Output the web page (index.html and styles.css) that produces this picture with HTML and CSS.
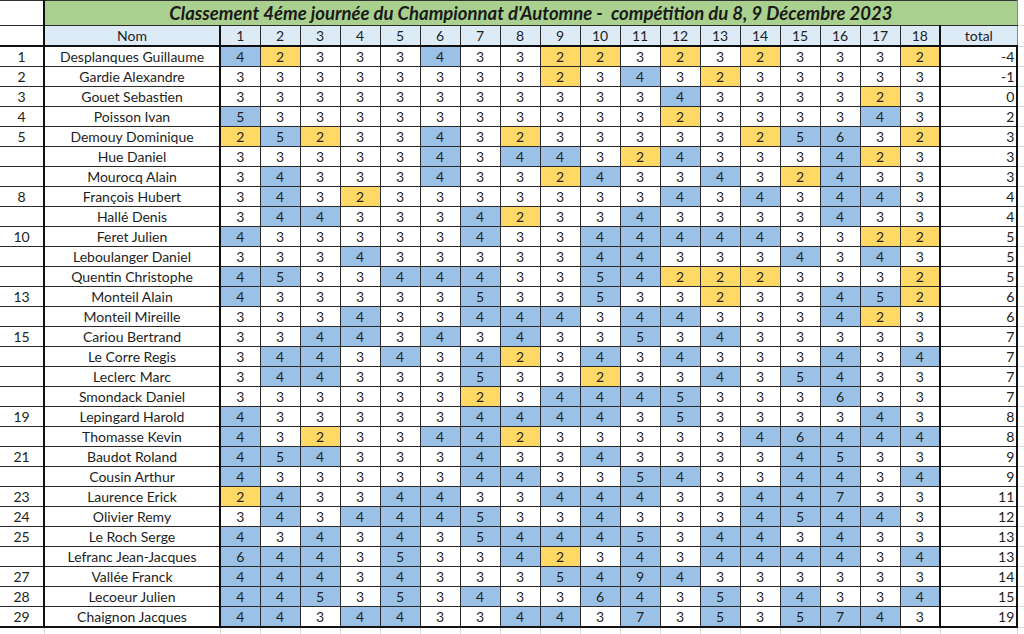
FILE: index.html
```html
<!DOCTYPE html>
<html lang="fr">
<head>
<meta charset="utf-8">
<title>Classement</title>
<link rel="stylesheet" href="styles.css">
</head>
<body>
<table class="sheet">
<colgroup>
<col class="c-rk"><col class="c-nm">
<col class="c-h"><col class="c-h"><col class="c-h"><col class="c-h"><col class="c-h"><col class="c-h">
<col class="c-h"><col class="c-h"><col class="c-h"><col class="c-h"><col class="c-h"><col class="c-h">
<col class="c-h"><col class="c-h"><col class="c-h"><col class="c-h"><col class="c-h"><col class="c-h">
<col class="c-tot"><col class="c-fill">
</colgroup>
<thead>
<tr class="title-row"><td class="rk"></td><td class="title" colspan="20">Classement 4éme journée du Championnat d'Automne -&nbsp; compétition du 8, 9 Décembre 2023</td><td class="fill"></td></tr>
<tr class="head-row"><td class="rk"></td><td class="nm">Nom</td><td>1</td><td>2</td><td>3</td><td>4</td><td>5</td><td>6</td><td>7</td><td>8</td><td>9</td><td>10</td><td>11</td><td>12</td><td>13</td><td>14</td><td>15</td><td>16</td><td>17</td><td>18</td><td class="tot-h">total</td><td class="fill"></td></tr>
</thead>
<tbody>
<tr><td class="rk">1</td><td class="nm">Desplanques Guillaume</td><td class="b">4</td><td class="y">2</td><td>3</td><td>3</td><td>3</td><td class="b">4</td><td>3</td><td>3</td><td class="y">2</td><td class="y">2</td><td>3</td><td class="y">2</td><td>3</td><td class="y">2</td><td>3</td><td>3</td><td>3</td><td class="y">2</td><td class="tot">-4</td><td class="fill"></td></tr>
<tr><td class="rk">2</td><td class="nm">Gardie Alexandre</td><td>3</td><td>3</td><td>3</td><td>3</td><td>3</td><td>3</td><td>3</td><td>3</td><td class="y">2</td><td>3</td><td class="b">4</td><td>3</td><td class="y">2</td><td>3</td><td>3</td><td>3</td><td>3</td><td>3</td><td class="tot">-1</td><td class="fill"></td></tr>
<tr><td class="rk">3</td><td class="nm">Gouet Sebastien</td><td>3</td><td>3</td><td>3</td><td>3</td><td>3</td><td>3</td><td>3</td><td>3</td><td>3</td><td>3</td><td>3</td><td class="b">4</td><td>3</td><td>3</td><td>3</td><td>3</td><td class="y">2</td><td>3</td><td class="tot">0</td><td class="fill"></td></tr>
<tr><td class="rk">4</td><td class="nm">Poisson Ivan</td><td class="b">5</td><td>3</td><td>3</td><td>3</td><td>3</td><td>3</td><td>3</td><td>3</td><td>3</td><td>3</td><td>3</td><td class="y">2</td><td>3</td><td>3</td><td>3</td><td>3</td><td class="b">4</td><td>3</td><td class="tot">2</td><td class="fill"></td></tr>
<tr><td class="rk">5</td><td class="nm">Demouy Dominique</td><td class="y">2</td><td class="b">5</td><td class="y">2</td><td>3</td><td>3</td><td class="b">4</td><td>3</td><td class="y">2</td><td>3</td><td>3</td><td>3</td><td>3</td><td>3</td><td class="y">2</td><td class="b">5</td><td class="b">6</td><td>3</td><td class="y">2</td><td class="tot">3</td><td class="fill"></td></tr>
<tr><td class="rk"></td><td class="nm">Hue Daniel</td><td>3</td><td>3</td><td>3</td><td>3</td><td>3</td><td class="b">4</td><td>3</td><td class="b">4</td><td class="b">4</td><td>3</td><td class="y">2</td><td class="b">4</td><td>3</td><td>3</td><td>3</td><td class="b">4</td><td class="y">2</td><td>3</td><td class="tot">3</td><td class="fill"></td></tr>
<tr><td class="rk"></td><td class="nm">Mourocq Alain</td><td>3</td><td class="b">4</td><td>3</td><td>3</td><td>3</td><td class="b">4</td><td>3</td><td>3</td><td class="y">2</td><td class="b">4</td><td>3</td><td>3</td><td class="b">4</td><td>3</td><td class="y">2</td><td class="b">4</td><td>3</td><td>3</td><td class="tot">3</td><td class="fill"></td></tr>
<tr><td class="rk">8</td><td class="nm">François Hubert</td><td>3</td><td class="b">4</td><td>3</td><td class="y">2</td><td>3</td><td>3</td><td>3</td><td>3</td><td>3</td><td>3</td><td>3</td><td class="b">4</td><td>3</td><td class="b">4</td><td>3</td><td class="b">4</td><td class="b">4</td><td>3</td><td class="tot">4</td><td class="fill"></td></tr>
<tr><td class="rk"></td><td class="nm">Hallé Denis</td><td>3</td><td class="b">4</td><td class="b">4</td><td>3</td><td>3</td><td>3</td><td class="b">4</td><td class="y">2</td><td>3</td><td>3</td><td class="b">4</td><td>3</td><td>3</td><td>3</td><td>3</td><td class="b">4</td><td>3</td><td>3</td><td class="tot">4</td><td class="fill"></td></tr>
<tr><td class="rk">10</td><td class="nm">Feret Julien</td><td class="b">4</td><td>3</td><td>3</td><td>3</td><td>3</td><td>3</td><td class="b">4</td><td>3</td><td>3</td><td class="b">4</td><td class="b">4</td><td class="b">4</td><td class="b">4</td><td class="b">4</td><td>3</td><td>3</td><td class="y">2</td><td class="y">2</td><td class="tot">5</td><td class="fill"></td></tr>
<tr><td class="rk"></td><td class="nm">Leboulanger Daniel</td><td>3</td><td>3</td><td>3</td><td class="b">4</td><td>3</td><td>3</td><td>3</td><td>3</td><td>3</td><td class="b">4</td><td class="b">4</td><td>3</td><td>3</td><td>3</td><td class="b">4</td><td>3</td><td class="b">4</td><td>3</td><td class="tot">5</td><td class="fill"></td></tr>
<tr><td class="rk"></td><td class="nm">Quentin Christophe</td><td class="b">4</td><td class="b">5</td><td>3</td><td>3</td><td class="b">4</td><td class="b">4</td><td class="b">4</td><td>3</td><td>3</td><td class="b">5</td><td class="b">4</td><td class="y">2</td><td class="y">2</td><td class="y">2</td><td>3</td><td>3</td><td>3</td><td class="y">2</td><td class="tot">5</td><td class="fill"></td></tr>
<tr><td class="rk">13</td><td class="nm">Monteil Alain</td><td class="b">4</td><td>3</td><td>3</td><td>3</td><td>3</td><td>3</td><td class="b">5</td><td>3</td><td>3</td><td class="b">5</td><td>3</td><td>3</td><td class="y">2</td><td>3</td><td>3</td><td class="b">4</td><td class="b">5</td><td class="y">2</td><td class="tot">6</td><td class="fill"></td></tr>
<tr><td class="rk"></td><td class="nm">Monteil Mireille</td><td>3</td><td>3</td><td>3</td><td class="b">4</td><td>3</td><td>3</td><td class="b">4</td><td class="b">4</td><td class="b">4</td><td>3</td><td class="b">4</td><td class="b">4</td><td>3</td><td>3</td><td>3</td><td class="b">4</td><td class="y">2</td><td>3</td><td class="tot">6</td><td class="fill"></td></tr>
<tr><td class="rk">15</td><td class="nm">Cariou Bertrand</td><td>3</td><td>3</td><td class="b">4</td><td class="b">4</td><td>3</td><td class="b">4</td><td>3</td><td class="b">4</td><td>3</td><td>3</td><td class="b">5</td><td>3</td><td class="b">4</td><td>3</td><td>3</td><td>3</td><td>3</td><td>3</td><td class="tot">7</td><td class="fill"></td></tr>
<tr><td class="rk"></td><td class="nm">Le Corre Regis</td><td>3</td><td class="b">4</td><td class="b">4</td><td>3</td><td class="b">4</td><td>3</td><td class="b">4</td><td class="y">2</td><td>3</td><td class="b">4</td><td>3</td><td class="b">4</td><td>3</td><td>3</td><td>3</td><td class="b">4</td><td>3</td><td class="b">4</td><td class="tot">7</td><td class="fill"></td></tr>
<tr><td class="rk"></td><td class="nm">Leclerc Marc</td><td>3</td><td class="b">4</td><td class="b">4</td><td>3</td><td>3</td><td>3</td><td class="b">5</td><td>3</td><td>3</td><td class="y">2</td><td>3</td><td>3</td><td class="b">4</td><td>3</td><td class="b">5</td><td class="b">4</td><td>3</td><td>3</td><td class="tot">7</td><td class="fill"></td></tr>
<tr><td class="rk"></td><td class="nm">Smondack Daniel</td><td>3</td><td>3</td><td>3</td><td>3</td><td>3</td><td>3</td><td class="y">2</td><td>3</td><td class="b">4</td><td class="b">4</td><td class="b">4</td><td class="b">5</td><td>3</td><td>3</td><td>3</td><td class="b">6</td><td>3</td><td>3</td><td class="tot">7</td><td class="fill"></td></tr>
<tr><td class="rk">19</td><td class="nm">Lepingard Harold</td><td class="b">4</td><td>3</td><td>3</td><td>3</td><td>3</td><td>3</td><td class="b">4</td><td class="b">4</td><td class="b">4</td><td class="b">4</td><td>3</td><td class="b">5</td><td>3</td><td>3</td><td>3</td><td>3</td><td class="b">4</td><td>3</td><td class="tot">8</td><td class="fill"></td></tr>
<tr><td class="rk"></td><td class="nm">Thomasse Kevin</td><td class="b">4</td><td>3</td><td class="y">2</td><td>3</td><td>3</td><td class="b">4</td><td class="b">4</td><td class="y">2</td><td>3</td><td>3</td><td>3</td><td>3</td><td>3</td><td class="b">4</td><td class="b">6</td><td class="b">4</td><td class="b">4</td><td class="b">4</td><td class="tot">8</td><td class="fill"></td></tr>
<tr><td class="rk">21</td><td class="nm">Baudot Roland</td><td class="b">4</td><td class="b">5</td><td class="b">4</td><td>3</td><td>3</td><td>3</td><td class="b">4</td><td>3</td><td>3</td><td class="b">4</td><td>3</td><td>3</td><td>3</td><td>3</td><td class="b">4</td><td class="b">5</td><td>3</td><td>3</td><td class="tot">9</td><td class="fill"></td></tr>
<tr><td class="rk"></td><td class="nm">Cousin Arthur</td><td class="b">4</td><td>3</td><td>3</td><td>3</td><td>3</td><td>3</td><td class="b">4</td><td class="b">4</td><td>3</td><td>3</td><td class="b">5</td><td class="b">4</td><td>3</td><td>3</td><td class="b">4</td><td class="b">4</td><td>3</td><td class="b">4</td><td class="tot">9</td><td class="fill"></td></tr>
<tr><td class="rk">23</td><td class="nm">Laurence Erick</td><td class="y">2</td><td class="b">4</td><td>3</td><td>3</td><td class="b">4</td><td class="b">4</td><td>3</td><td>3</td><td class="b">4</td><td class="b">4</td><td class="b">4</td><td>3</td><td>3</td><td class="b">4</td><td class="b">4</td><td class="b">7</td><td>3</td><td>3</td><td class="tot">11</td><td class="fill"></td></tr>
<tr><td class="rk">24</td><td class="nm">Olivier Remy</td><td>3</td><td class="b">4</td><td>3</td><td class="b">4</td><td class="b">4</td><td class="b">4</td><td class="b">5</td><td>3</td><td>3</td><td class="b">4</td><td>3</td><td>3</td><td>3</td><td class="b">4</td><td class="b">5</td><td class="b">4</td><td class="b">4</td><td>3</td><td class="tot">12</td><td class="fill"></td></tr>
<tr><td class="rk">25</td><td class="nm">Le Roch Serge</td><td class="b">4</td><td>3</td><td class="b">4</td><td>3</td><td class="b">4</td><td>3</td><td class="b">5</td><td class="b">4</td><td class="b">4</td><td class="b">4</td><td class="b">5</td><td>3</td><td class="b">4</td><td class="b">4</td><td>3</td><td class="b">4</td><td>3</td><td>3</td><td class="tot">13</td><td class="fill"></td></tr>
<tr><td class="rk"></td><td class="nm">Lefranc Jean-Jacques</td><td class="b">6</td><td class="b">4</td><td class="b">4</td><td>3</td><td class="b">5</td><td>3</td><td>3</td><td class="b">4</td><td class="y">2</td><td>3</td><td class="b">4</td><td>3</td><td class="b">4</td><td class="b">4</td><td class="b">4</td><td class="b">4</td><td>3</td><td class="b">4</td><td class="tot">13</td><td class="fill"></td></tr>
<tr><td class="rk">27</td><td class="nm">Vallée Franck</td><td class="b">4</td><td class="b">4</td><td class="b">4</td><td>3</td><td class="b">4</td><td>3</td><td>3</td><td>3</td><td class="b">5</td><td class="b">4</td><td class="b">9</td><td class="b">4</td><td>3</td><td>3</td><td>3</td><td>3</td><td>3</td><td>3</td><td class="tot">14</td><td class="fill"></td></tr>
<tr><td class="rk">28</td><td class="nm">Lecoeur Julien</td><td class="b">4</td><td class="b">4</td><td class="b">5</td><td>3</td><td class="b">5</td><td>3</td><td class="b">4</td><td>3</td><td>3</td><td class="b">6</td><td class="b">4</td><td>3</td><td class="b">5</td><td>3</td><td class="b">4</td><td>3</td><td>3</td><td class="b">4</td><td class="tot">15</td><td class="fill"></td></tr>
<tr class="last"><td class="rk">29</td><td class="nm">Chaignon Jacques</td><td class="b">4</td><td class="b">4</td><td>3</td><td class="b">4</td><td class="b">4</td><td>3</td><td>3</td><td class="b">4</td><td class="b">4</td><td>3</td><td class="b">7</td><td>3</td><td class="b">5</td><td>3</td><td class="b">5</td><td class="b">7</td><td class="b">4</td><td>3</td><td class="tot">19</td><td class="fill"></td></tr>
<tr class="grid"><td class="rk"></td><td class="nm"></td><td></td><td></td><td></td><td></td><td></td><td></td><td></td><td></td><td></td><td></td><td></td><td></td><td></td><td></td><td></td><td></td><td></td><td></td><td class="tot"></td><td class="fill"></td></tr>
</tbody>
</table>
</body>
</html>
```

FILE: styles.css
```css
html, body {
  margin: 0;
  padding: 0;
  background: #ffffff;
}

body {
  overflow: hidden;
  height: 634px;
}

.sheet {
  border-collapse: collapse;
  table-layout: fixed;
  width: 1024px;
  font-family: Lato, "Open Sans", "Liberation Sans", sans-serif;
  font-size: 14px;
  color: #1e1e1e;
}

.c-rk { width: 44px; }
.c-nm { width: 176px; }
.c-h { width: 40px; }
.c-tot { width: 77px; }
.c-fill { width: 7px; }

.sheet td {
  border: 1px solid #2a2a2a;
  padding: 0;
  height: 19px;
  text-align: center;
  vertical-align: middle;
  white-space: nowrap;
  overflow: hidden;
  line-height: 18px;
}

.sheet td.rk {
  border-left: none;
  border-right: 2px solid #111111;
}

.sheet td.nm {
  border-right: 2px solid #111111;
}

.sheet td.b { background: #9bc2e6; }
.sheet td.y { background: #ffd966; }

.sheet td.tot {
  text-align: right;
  padding-right: 2px;
  border-left: 2px solid #111111;
  border-right: 2px solid #111111;
}

.title-row td {
  height: 24px;
  border-top: 1px solid #333333;
}

.sheet td.title {
  background: #a9d08e;
  font-weight: bold;
  font-style: italic;
  font-size: 18.5px;
  color: #1a1a1a;
  border-right: 1px solid #888888;
}

.head-row td {
  background: #ddebf7;
  border-bottom: 2px solid #111111;
}

.head-row td.rk {
  background: #ffffff;
}

.sheet .head-row td.tot-h {
  border-left: 2px solid #111111;
  border-right: 1px solid #888888;
}

.sheet td.fill {
  border: none;
  border-bottom: 1px solid #d9d9d9;
  background: #ffffff;
}

.last td {
  border-bottom: 2px solid #111111;
}

.sheet .grid td,
.sheet .grid td.nm,
.sheet .grid td.tot {
  border: none;
  border-left: 1px solid #d9d9d9;
  border-right: 1px solid #d9d9d9;
}

.sheet .grid td.rk {
  border-left: none;
  border-right: 1px solid #d9d9d9;
}
```
